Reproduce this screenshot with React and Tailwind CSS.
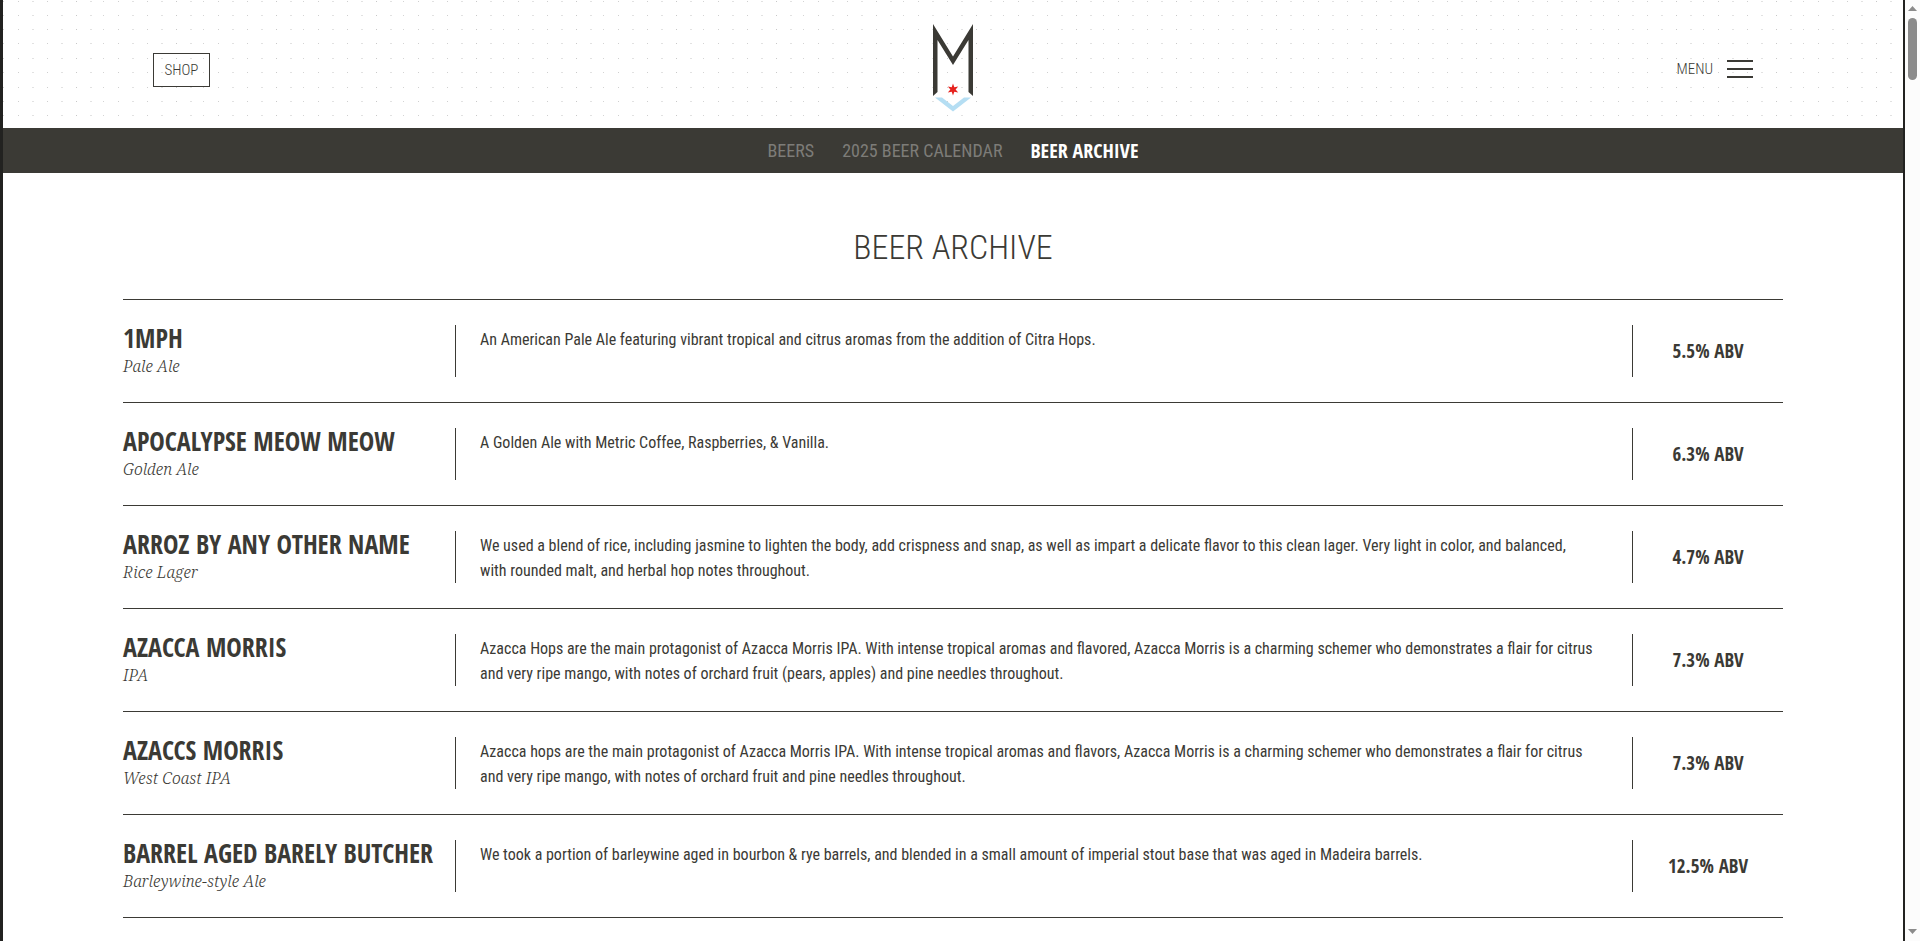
const beers = [
  { name: '1MPH', style: 'Pale Ale', abv: '5.5% ABV', text: 'An American Pale Ale featuring vibrant tropical and citrus aromas from the addition of Citra Hops.' },
  { name: 'APOCALYPSE MEOW MEOW', style: 'Golden Ale', abv: '6.3% ABV', text: 'A Golden Ale with Metric Coffee, Raspberries, & Vanilla.' },
  { name: 'ARROZ BY ANY OTHER NAME', style: 'Rice Lager', abv: '4.7% ABV', text: 'We used a blend of rice, including jasmine to lighten the body, add crispness and snap, as well as impart a delicate flavor to this clean lager. Very light in color, and balanced, with rounded malt, and herbal hop notes throughout.' },
  { name: 'AZACCA MORRIS', style: 'IPA', abv: '7.3% ABV', text: 'Azacca Hops are the main protagonist of Azacca Morris IPA. With intense tropical aromas and flavored, Azacca Morris is a charming schemer who demonstrates a flair for citrus and very ripe mango, with notes of orchard fruit (pears, apples) and pine needles throughout.' },
  { name: 'AZACCS MORRIS', style: 'West Coast IPA', abv: '7.3% ABV', text: 'Azacca hops are the main protagonist of Azacca Morris IPA. With intense tropical aromas and flavors, Azacca Morris is a charming schemer who demonstrates a flair for citrus and very ripe mango, with notes of orchard fruit and pine needles throughout.' },
  { name: 'BARREL AGED BARELY BUTCHER', style: 'Barleywine-style Ale', abv: '12.5% ABV', text: 'We took a portion of barleywine aged in bourbon & rye barrels, and blended in a small amount of imperial stout base that was aged in Madeira barrels.' },
];

const dotRows = [0, 14, 28, 42, 57, 71, 86];
const dotColumns = [
  [0, 1, '#d4d4d4'],
  [15, 1, '#cfcfcf'],
  [29, 2, '#e2e2e2'],
  [44, 1, '#cfcfcf'],
  [58, 2, '#e2e2e2'],
  [73, 1, '#c8c8c8'],
  [87, 2, '#e2e2e2'],
];

function DotGrid() {
  return (
    <svg className="absolute inset-0 h-full w-full" aria-hidden="true">
      <defs>
        <pattern id="dots" width="100" height="100" patternUnits="userSpaceOnUse">
          {dotRows.map((y) => dotColumns.map(([x, w, fill]) => <rect key={`${x}-${y}`} x={x} y={y + 1} width={w} height="1" fill={fill} />))}
        </pattern>
      </defs>
      <rect width="100%" height="118" fill="url(#dots)" />
    </svg>
  );
}

function Logo() {
  return (
    <svg viewBox="0 0 42 88" className="h-[88px] w-[42px]" aria-hidden="true">
      <path fill="#3b3a35" d="M1 0 L21 32.5 L41 0 V72 L36.5 68 V16 L21 41 L5.5 16 V68 L1 72 Z" />
      <path fill="#b5def3" d="M3 73.5 H10 L21 82 L32 73.5 H39 L21 87.5 Z" />
      <path fill="#e6221e" d="M21 59.5 L22.3 63.3 L26.2 62.5 L23.6 65.5 L26.2 68.5 L22.3 67.7 L21 71.5 L19.7 67.7 L15.8 68.5 L18.4 65.5 L15.8 62.5 L19.7 63.3 Z" />
    </svg>
  );
}

function Header() {
  return (
    <header className="relative h-32 bg-white">
      <DotGrid />
      <div className="relative grid h-full grid-cols-3 items-center px-[150px] font-['Roboto_Condensed',Roboto,sans-serif] text-[15px] font-light">
        <a href="#shop" className="mt-3 flex h-[34px] w-[57px] items-center justify-center justify-self-start border border-[#3b3a35]">SHOP</a>
        <a href="#home" aria-label="Home" className="justify-self-center pt-2"><Logo /></a>
        <button type="button" className="mt-2.5 flex items-center gap-3.5 justify-self-end">
          <span>MENU</span>
          <span className="flex w-[26px] flex-col gap-1.5">
            <span className="h-0.5 bg-[#3b3a35]" />
            <span className="h-0.5 bg-[#3b3a35]" />
            <span className="h-0.5 bg-[#3b3a35]" />
          </span>
        </button>
      </div>
    </header>
  );
}

function SubNav() {
  return (
    <nav className="flex h-[45px] items-center justify-center gap-7 bg-[#3b3a35] font-['Roboto_Condensed',Roboto,sans-serif] text-lg text-[#7d7c78]">
      <a href="#beers">BEERS</a>
      <a href="#calendar">2025 BEER CALENDAR</a>
      <a href="#archive" className="font-['Open_Sans_Condensed','Open_Sans',sans-serif] text-xl font-bold text-white">BEER ARCHIVE</a>
    </nav>
  );
}

function BeerRow({ beer }) {
  return (
    <li className="flex border-b border-[#3b3a35] py-[25px]">
      <div className="w-1/5 shrink-0">
        <h2 className="mb-1 whitespace-nowrap font-['Open_Sans_Condensed','Open_Sans',sans-serif] text-[26px] leading-[26px] font-bold">{beer.name}</h2>
        <p className="font-['Noto_Serif','DejaVu_Serif_Condensed',serif] text-base leading-[22px] font-light italic">{beer.style}</p>
      </div>
      <p className="min-h-[52px] flex-1 border-x border-[#3b3a35] pt-0.5 pr-[38px] pl-6 font-['Roboto_Condensed',Roboto,sans-serif] text-base leading-[25px]">{beer.text}</p>
      <p className="flex w-[150px] shrink-0 items-center justify-center font-['Open_Sans_Condensed','Open_Sans',sans-serif] text-[19px] leading-6 font-bold">{beer.abv}</p>
    </li>
  );
}

function ScrollBar() {
  return (
    <div className="sticky top-0 flex h-screen w-[15px] shrink-0 flex-col items-center justify-between bg-[#fcfcfc] pt-1.5 pb-[7px]" aria-hidden="true">
      <div className="flex flex-col items-center gap-[7px]">
        <svg viewBox="0 0 9 5" className="h-[5px] w-[9px]"><path d="M0 5 L4.5 0 L9 5 Z" fill="#8b8b8b" /></svg>
        <div className="h-[62px] w-[9px] rounded-full bg-[#8b8b8b]" />
      </div>
      <svg viewBox="0 0 9 5" className="h-[5px] w-[9px]"><path d="M0 0 L4.5 5 L9 0 Z" fill="#8b8b8b" /></svg>
    </div>
  );
}

export default function App() {
  return (
    <div className="flex min-h-screen bg-white text-[#3b3a35]">
      <div className="min-w-0 flex-1 border-r-2 border-l-3 border-[#222220]">
        <Header />
        <SubNav />
        <main className="px-[120px]">
          <h1 className="pt-[54px] pb-8 text-center font-['Roboto_Condensed',Roboto,sans-serif] text-[34px] leading-10 font-light">BEER ARCHIVE</h1>
          <ul className="border-t border-[#3b3a35]">
            {beers.map((beer) => <BeerRow key={beer.name} beer={beer} />)}
          </ul>
        </main>
      </div>
      <ScrollBar />
    </div>
  );
}
